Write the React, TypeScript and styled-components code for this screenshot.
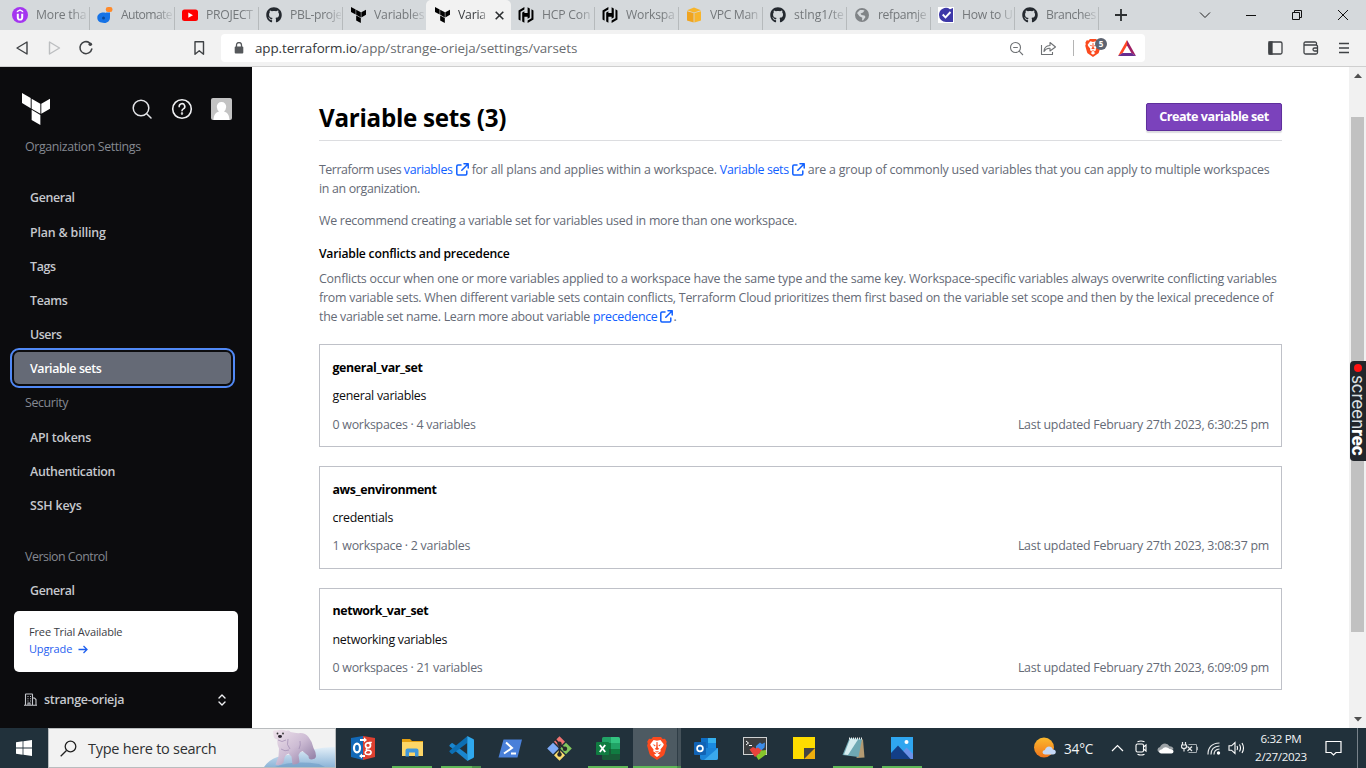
import React from "react";
import styled, { createGlobalStyle, css } from "styled-components";
import { FaGithub } from "react-icons/fa";

const Global = createGlobalStyle`
  * { box-sizing: border-box; }
  body { margin: 0; background: #fff; overflow: hidden; }
  body, button { font-family: "Open Sans", "Noto Sans", sans-serif; }
  svg { display: block; flex: none; }
`;

const Screen = styled.div`
  width: 1366px;
  height: 768px;
  display: flex;
  flex-direction: column;
  position: relative;
  overflow: hidden;
`;

/* ---------- browser chrome ---------- */

const TabStrip = styled.div`
  height: 30px;
  flex: none;
  background: #d5d9dc;
  display: flex;
  padding-left: 4px;
`;

const Tab = styled.div<{ $active?: boolean; $wide?: boolean; $quiet?: boolean }>`
  width: ${(p) => (p.$wide ? 85 : 84)}px;
  height: 30px;
  flex: none;
  display: flex;
  align-items: center;
  padding-left: 8px;
  color: #74787b;
  font-size: 12.2px;
  position: relative;
  &::after {
    content: "";
    position: absolute;
    right: -1px;
    top: 7px;
    width: 1px;
    height: 23px;
    background: ${(p) => (p.$quiet || p.$active ? "transparent" : "#b6babc")};
  }
  ${(p) =>
    p.$active &&
    css`
      background: #f2f2f2;
      color: #3a3d40;
      border-radius: 5px 5px 0 0;
      width: 85px;
      margin-right: -1px;
    `}
`;

const Favicon = styled.span`
  width: 16px;
  height: 16px;
  margin-right: 8px;
  display: flex;
  align-items: center;
  justify-content: center;
  flex: none;
`;

const TabTitle = styled.span<{ $short?: boolean; $ls: number }>`
  width: ${(p) => (p.$short ? 30 : 51)}px;
  letter-spacing: ${(p) => p.$ls}px;
  overflow: hidden;
  white-space: nowrap;
  flex: none;
  line-height: 18px;
  mask-image: linear-gradient(to right, #000 70%, rgba(0, 0, 0, 0.15));
`;

const WindowButtons = styled.div`
  flex: 1;
  display: flex;
  align-items: center;
  justify-content: flex-end;
  gap: 34px;
  padding-right: 17px;
  svg { width: 12px; height: 12px; }
`;

const NewTab = styled.div`
  display: flex;
  align-items: center;
  padding-left: 17px;
`;

const Toolbar = styled.div`
  height: 37px;
  flex: none;
  background: #f2f2f2;
  border-bottom: 1px solid #cfcfcf;
  display: flex;
  align-items: center;
`;

const NavButtons = styled.div`
  width: 221px;
  display: flex;
  align-items: center;
  padding-left: 14px;
  gap: 16px;
  svg:last-child { margin-left: 81px; }
`;

const AddressBar = styled.div`
  width: 924px;
  height: 28px;
  background: #fff;
  border-radius: 4px;
  display: flex;
  align-items: center;
  padding: 0 9px 0 13px;
`;

const Url = styled.span`
  flex: 1;
  margin-left: 11px;
  font-size: 13.4px;
  letter-spacing: -0.09px;
  color: #6a6d70;
  white-space: nowrap;
  b { color: #34373a; font-weight: 400; }
`;

const AddressTools = styled.div`
  display: flex;
  align-items: center;
`;

const Divider = styled.i`
  width: 1px;
  height: 16px;
  background: #b4b4b4;
  margin: 0 11px 0 16px;
`;

const ShieldWrap = styled.span`
  position: relative;
  margin-right: 17px;
`;

const ShieldCount = styled.span`
  position: absolute;
  left: 10px;
  top: -1px;
  width: 12px;
  height: 12px;
  border-radius: 6px;
  background: #5d6370;
  color: #fff;
  font: 700 8px/12px "Open Sans", sans-serif;
  text-align: center;
`;

const ToolbarEnd = styled.div`
  flex: 1;
  display: flex;
  align-items: center;
  justify-content: flex-end;
  padding-right: 17px;
  gap: 20px;
`;

/* ---------- page body ---------- */

const Body = styled.div`
  height: 661px;
  flex: none;
  display: flex;
`;

const Sidebar = styled.aside`
  width: 252px;
  background: #0c0c0e;
  display: flex;
  flex-direction: column;
  flex: none;
`;

const SideHeader = styled.div`
  height: 60px;
  padding: 26px 20px 0 22px;
  display: flex;
  align-items: flex-start;
`;

const SideTools = styled.div`
  flex: 1;
  display: flex;
  align-items: center;
  justify-content: flex-end;
  gap: 18.5px;
  padding-top: 5px;
`;

const SideLabel = styled.div<{ $gap: number; $below: number; $ls: number }>`
  margin: ${(p) => p.$gap}px 0 ${(p) => p.$below}px 25px;
  height: 18px;
  line-height: 18px;
  font-size: 12.4px;
  letter-spacing: ${(p) => p.$ls}px;
  color: #858991;
  white-space: nowrap;
`;

const SideItem = styled.a<{ $active?: boolean; $ls?: number; $gap?: number }>`
  height: 32px;
  flex: none;
  margin: ${(p) => p.$gap ?? 0}px 21px 2px 14px;
  padding-left: 16px;
  line-height: 34px;
  font-size: 12.4px;
  font-weight: 600;
  letter-spacing: ${(p) => p.$ls ?? -0.35}px;
  color: #c6c8cd;
  white-space: nowrap;
  border-radius: 5px;
  ${(p) =>
    p.$active &&
    css`
      color: #fff;
      background: #656a76;
      outline: 2px solid #5189f5;
      outline-offset: 2px;
    `}
`;

const TrialCard = styled.div`
  margin: 3px 14px 0;
  height: 61px;
  flex: none;
  background: #fff;
  border-radius: 5px;
  padding: 12px 15px;
  font-size: 11px;
  line-height: 17px;
  letter-spacing: -0.15px;
  color: #3b3d45;
`;

const Upgrade = styled.a`
  color: #1f60f0;
  display: flex;
  align-items: center;
  gap: 6px;
  svg { margin-top: 2px; }
`;

const OrgRow = styled.div`
  height: 55px;
  padding: 0 26px 0 24px;
  display: flex;
  align-items: center;
  font-size: 12.5px;
  font-weight: 600;
  color: #c6c8cd;
  letter-spacing: -0.29px;
  span { flex: 1; margin-left: 7px; }
`;

const Main = styled.main`
  width: 1097px;
  flex: none;
  background: #fff;
  padding: 35px 67px 0;
`;

const TitleRow = styled.div`
  height: 39px;
  display: flex;
  justify-content: space-between;
  border-bottom: 1px solid #dcdde0;
`;

const Title = styled.h1`
  margin: 0;
  font-size: 24.2px;
  line-height: 32px;
  font-weight: 700;
  letter-spacing: -0.28px;
  color: #000;
`;

const CreateButton = styled.button`
  width: 136px;
  height: 28px;
  margin-top: 1px;
  padding: 0 0 2px;
  border: 1px solid #5f2f9c;
  border-radius: 2px;
  background: #7b42bc;
  box-shadow: 0 2px 1px rgba(40, 40, 60, 0.16);
  color: #fff;
  font-size: 12.6px;
  font-weight: 700;
  letter-spacing: -0.47px;
  white-space: nowrap;
`;

const Paragraph = styled.p<{ $top: number }>`
  margin: ${(p) => p.$top}px 0 0;
  color: #656a76;
  font-size: 12.4px;
`;

const Line = styled.span<{ $ls?: number }>`
  display: flex;
  align-items: center;
  height: 19px;
  line-height: 19px;
  white-space: pre;
  letter-spacing: ${(p) => p.$ls ?? -0.24}px;
`;

const Run = styled.span<{ $ls: number }>`
  letter-spacing: ${(p) => p.$ls}px;
`;

const Link = styled.a<{ $ls?: number }>`
  color: #1060ff;
  display: inline-flex;
  align-items: center;
  gap: 3px;
  letter-spacing: ${(p) => p.$ls ?? -0.33}px;
`;

const SubHeading = styled.h2`
  margin: 14px 0 6px;
  height: 19px;
  line-height: 19px;
  font-size: 12.2px;
  font-weight: 600;
  letter-spacing: -0.22px;
  color: #000;
`;

const SetList = styled.div`
  margin-top: 18px;
  display: flex;
  flex-direction: column;
  gap: 19px;
`;

const SetCard = styled.article<{ $last: boolean }>`
  height: ${(p) => (p.$last ? 102 : 103)}px;
  border: 1px solid #bfc1c8;
  padding: ${(p) => (p.$last ? 12 : 13)}px 12px 0 12.5px;
  font-size: 12.4px;
`;

const SetName = styled.h3`
  margin: 0;
  height: 19px;
  line-height: 19px;
  font-size: 12.4px;
  font-weight: 700;
  letter-spacing: -0.4px;
  color: #000;
`;

const SetNote = styled.div<{ $above: number; $below: number }>`
  margin: ${(p) => p.$above}px 0 ${(p) => p.$below}px;
  height: 19px;
  line-height: 19px;
  letter-spacing: -0.27px;
  color: #0c0c0e;
`;

const SetMeta = styled.div`
  display: flex;
  justify-content: space-between;
  line-height: 19px;
  color: #656a76;
  letter-spacing: -0.255px;
`;

const Scrollbar = styled.div`
  width: 17px;
  background: #f1f1f1;
  display: flex;
  flex-direction: column;
  align-items: center;
  justify-content: space-between;
  padding: 6px 0;
`;

const Thumb = styled.div`
  width: 13px;
  height: 515px;
  background: #c1c1c1;
  margin: 39px 0 85px;
`;

const Recorder = styled.div`
  position: absolute;
  right: 0;
  top: 361px;
  width: 16px;
  height: 100px;
  background: #22262b;
  border-radius: 4px 0 0 4px;
  display: flex;
  flex-direction: column;
  align-items: center;
  padding-top: 3px;
`;

const RecDot = styled.i`
  width: 8px;
  height: 8px;
  border-radius: 4px;
  background: #f11;
  margin-right: 1px;
`;

const RecText = styled.span`
  margin-top: 3px;
  writing-mode: vertical-rl;
  font: 400 17px/16px "Inter", sans-serif;
  letter-spacing: -0.1px;
  color: #dfe1e3;
  b { font-weight: 800; color: #fff; }
`;

/* ---------- taskbar ---------- */

const Taskbar = styled.footer`
  height: 40px;
  flex: none;
  background: #21313b;
  display: flex;
`;

const Start = styled.div`
  width: 48px;
  display: flex;
  align-items: center;
  justify-content: center;
`;

const Search = styled.div`
  width: 288px;
  height: 40px;
  background: #f2f2f2;
  border: 1px solid #b9bcbe;
  display: flex;
  align-items: center;
  padding-left: 11px;
  color: #2f3133;
  font-size: 14.5px;
  letter-spacing: -0.27px;
  white-space: nowrap;
  overflow: hidden;
  span { margin-left: 11px; flex: 1; }
`;

const Apps = styled.div`
  display: flex;
  width: 594px;
  padding-left: 2.5px;
`;

const AppSlot = styled.div<{ $active?: boolean; $open?: boolean; $stacked?: boolean }>`
  width: 49px;
  height: 40px;
  flex: none;
  display: flex;
  align-items: center;
  justify-content: center;
  ${(p) =>
    p.$open &&
    css`
      background: linear-gradient(#5fb858, #5fb858) 4px 100% / 40px 2px no-repeat;
    `}
  ${(p) =>
    p.$stacked &&
    css`
      background: linear-gradient(90deg, #5fb858 31px, #4a8f4c 31px) 4px 100% / 40px 2px no-repeat;
    `}
  ${(p) =>
    p.$active &&
    css`
      background: linear-gradient(90deg, #5fb858 44px, #4a8f4c 44px) 0 100% / 48px 2px no-repeat,
        linear-gradient(90deg, #4d5a62 0 44px, #2f3d46 44px 45px, #45525a 45px) 0 0 / 48px 40px no-repeat;
    `}
`;

const Tray = styled.div`
  flex: 1;
  display: flex;
  align-items: center;
  padding-left: 104px;
  color: #f2f4f5;
  white-space: nowrap;
`;

const Temp = styled.span`
  margin: 0 16px 0 8px;
  width: 31px;
  font-size: 13.6px;
  letter-spacing: -0.2px;
`;

const TrayIcons = styled.div`
  display: flex;
  align-items: center;
  gap: 7px;
  width: 139px;
`;

const Clock = styled.div`
  width: 62px;
  text-align: center;
  font-size: 11.6px;
  line-height: 18px;
  letter-spacing: -0.35px;
`;

const Notify = styled.div`
  margin-left: 9px;
  width: 37px;
  height: 40px;
  display: flex;
  align-items: center;
  padding-left: 4px;
  border-right: 1px solid #78828a;
`;

/* ---------- drawings ---------- */

const TerraformMark = ({ size = 16, color = "#000", h }: { size?: number; color?: string; h?: number }) => (
  <svg width={size} height={h ?? size} viewBox="1.44 0 21.12 24" fill={color} preserveAspectRatio="none">
    <path d="M1.44 0v7.575l6.561 3.79V3.787zm21.12 4.227l-6.561 3.791v7.574l6.56-3.787zM8.72 4.23v7.575l6.561 3.787V8.018zm0 8.405v7.575L15.28 24v-7.578z" />
  </svg>
);

const HashiMark = () => (
  <svg width="16" height="16" viewBox="0 0 24 24" fill="#000">
    <path d="M9.6 0 .8 5.200v13.600l3 1.700V7.200l5.800-3.400zM14.400 24l8.800-5.200V5.200l-3-1.700v13.300l-5.800 3.400zM9.600 6.300 6.300 8.200v13.700l3.300 1.900v-9.200h4.800v3.100l3.300-1.900V2.100L14.400.2v8.800H9.600z" />
  </svg>
);

const UdemyMark = () => (
  <svg width="16" height="16" viewBox="0 0 16 16">
    <circle cx="8" cy="8" r="8" fill="#a435f0" />
    <path d="M8 2.200 11.200 4v1.600L8 3.800 4.800 5.600V4zM4.800 6.800h2v3.600c0 1 .5 1.400 1.200 1.400s1.200-.4 1.200-1.400V6.800h2v3.600c0 2-1.200 3.200-3.200 3.200s-3.200-1.200-3.200-3.200z" fill="#fff" />
  </svg>
);

const DocMark = () => (
  <svg width="16" height="16" viewBox="0 0 16 16">
    <path d="M8.800 5.500h4.200v5c0 3-2.300 5.500-5.600 5.500C3.300 16 .3 14.200.3 10.800.3 7.800 3 5.600 6.200 5.600c1 0 1.900.1 2.600.4z" fill="#1673e6" />
    <circle cx="6.500" cy="11" r="1.500" fill="#0a4a9c" />
    <rect x="8.800" y="0" width="6.700" height="5" rx="2.300" fill="#ff8a2a" />
  </svg>
);

const YoutubeMark = () => (
  <svg width="16" height="16" viewBox="0 0 16 16">
    <rect y="2.500" width="16" height="11.500" rx="2.500" fill="#f00" />
    <path d="M6.300 5.600v5.200L11 8.200z" fill="#fff" />
  </svg>
);

const AwsCube = () => (
  <svg width="16" height="16" viewBox="0 0 16 16">
    <path d="M1 3.200 8 .6l7 2.600L8 5.400z" fill="#f7b52c" />
    <path d="M1 4.200 7.600 6v9.500L1 13.400z" fill="#f0a41f" />
    <path d="M15 4.200 8.400 6v9.500l6.600-2.100z" fill="#f7b52c" />
  </svg>
);

const GlobeMark = () => (
  <svg width="16" height="16" viewBox="0 0 16 16">
    <circle cx="8" cy="8" r="7" fill="#808487" />
    <path d="M6 3c2 0 3.500-.5 4.500.6L9 5.500 6.500 6.500l1 1.500 3 .5 1 1.500-2.500 3.500-1-.2.3-2.500-2.800-1.500L3 6z" fill="#d5d9dc" />
  </svg>
);

const CheckMark = () => (
  <svg width="16" height="16" viewBox="0 0 16 16">
    <rect width="16" height="16" fill="#fff" />
    <path d="M1 8a7 7 0 0 1 11-5.800L15 1v14H8a7 7 0 0 1-7-7z" fill="#3d38a8" />
    <path d="M4.700 7.500 7.500 10.300l5-5.300" fill="none" stroke="#fff" strokeWidth="1.900" />
  </svg>
);

const ExternalIcon = () => (
  <svg width="13" height="13" viewBox="0 0 13 13" fill="none" stroke="#1060ff" strokeWidth="1.500" strokeLinecap="round" strokeLinejoin="round">
    <path d="M8 .8h4.200V5M12 1 5.800 7.200M5 2H2Q.8 2 .8 3.200v7.600Q.8 12 2 12h7.600q1.200 0 1.200-1.200V8" />
  </svg>
);

const LionIcon = ({ w, h }: { w: number; h: number }) => (
  <svg width={w} height={h} viewBox="0 0 20 23">
    <path d="M6 0h8l1.600 1.900L18 1.700l1.800 3-.6 1.700.7 2.200-2.300 8.200q-.4 1.300-1.600 2.200L10 23l-6-4q-1.200-.9-1.600-2.200L.1 8.600l.7-2.200-.6-1.700L2 1.700l2.400.2z" fill="#fb4a1e" />
    <path d="M10 3.700 13.400 3l3.400 4.200-.6 1.900-2.800 3.300.4 1.900L10 16.800l-3.800-2.500.4-1.900-2.800-3.300-.6-1.900L6.600 3zM10 20l-3-2.200L10 16l3 1.800z" fill="#fff" />
    <path d="M5.500 7.300 8.500 8 8 9.500zm9 0-3 .7.500 1.500zM9.500 5h1l.3 5.500 1.500 1.500L10 13l-2.300-1 1.500-1.500zM7.500 13.800l2.500.8 2.500-.8-2.500 2z" fill="#fb4a1e" />
  </svg>
);

const BearArt = () => (
  <svg width="71" height="38" viewBox="0 0 71 38">
    <defs>
      <linearGradient id="ice" x1="0" y1="0" x2="0" y2="1">
        <stop offset="0" stopColor="#e3eff8" />
        <stop offset="1" stopColor="#8db5d8" />
      </linearGradient>
      <linearGradient id="fur" x1="0" y1="0" x2="1" y2="1">
        <stop offset="0" stopColor="#f0e4ec" />
        <stop offset=".5" stopColor="#cdbcd4" />
        <stop offset="1" stopColor="#85729c" />
      </linearGradient>
    </defs>
    <path d="M0 38q6-9 18-11 16-3 28-6 14-3 25-3v20z" fill="url(#ice)" />
    <path d="M11 38q18-7 44-3l6 3z" fill="#6e9cc7" opacity=".6" />
    <path d="M9 2.500Q10 .5 12.500 1.500q5-1.500 10 .2Q25 .5 26.500 3q6 1.500 10 1 5 0 8 4 4 5 5 11 2.500 4 2.500 8 0 3-4.500 3.500-3 0-3-3.500l-6-5q-3 1-4 4l1 7q-2 3-7 2.500l-1-8-3-3q-3 1-4 4l-1 5q-3 4-8 2l3-8 .5-8q-2.500-5-1.500-9-4-.5-4-4.500z" fill="url(#fur)" />
    <path d="M24 10q-2 6 2 10M35 20q2-4 1-8M17 20q4 3 8 1M14 11q4 3 8 0" stroke="#9f8bb2" fill="none" opacity=".7" />
    <circle cx="13.500" cy="4.500" r=".9" fill="#333" /><circle cx="19" cy="4.500" r=".9" fill="#333" />
    <ellipse cx="16" cy="7.500" rx="2" ry="1.400" fill="#2c2530" />
  </svg>
);

const OgIcon = () => (
  <svg width="24" height="24" viewBox="0 0 24 24">
    <path d="M0 2 12 0v24L0 21z" fill="#1269b8" /><path d="m12 0 12 2v19l-12 3z" fill="#dd4030" />
    <ellipse cx="6" cy="12" rx="3" ry="4.300" fill="none" stroke="#fff" strokeWidth="2.200" />
    <circle cx="17" cy="9.300" r="2.500" fill="none" stroke="#fff" strokeWidth="1.700" />
    <path d="M20.800 6.500h-3M16 12.300c-1.500 1.200-.5 1.900 1 1.900 4.500 0 3.800 4.300.2 4.300-3.800 0-3.800-3-1-3.800" fill="none" stroke="#fff" strokeWidth="1.500" />
    <path d="M9 3h4V1.200L16 4l-3 2.500V5H9zM14 19h-3v-1.500L8 20l3 2.500V21h3z" fill="#fff" />
  </svg>
);

const FolderIcon = () => (
  <svg width="23" height="20" viewBox="0 0 23 20">
    <path d="M1 1h8l2 2h11v4H1z" fill="#e5a011" /><path d="M1 4h21v14H1z" fill="#fdd667" />
    <path d="M4.500 18.500v-6q0-2 2-2h9q2 0 2 2v6H14v-4H8v4z" fill="#3f97dc" />
  </svg>
);

const CodeIcon = () => (
  <svg width="25" height="25" viewBox="0 0 24 24">
    <path d="M.6 8.600 2.400 7q.6-.4 1.200 0L17.500 17.400v6.300L.6 9.800q-.6-.6 0-1.200z" fill="#1a86cf" />
    <path d="M.6 15.400 2.400 17q.6.400 1.200 0L17.500 6.600V.3L.6 14.200q-.6.600 0 1.200z" fill="#0c6fb4" />
    <path d="M17.500.1 23.200 2.800q.8.400.8 1.200v16q0 .8-.8 1.200L17.500 23.900z" fill="#2fa8ee" />
  </svg>
);

const ShellIcon = () => (
  <svg width="24" height="19" viewBox="0 0 24 19">
    <path d="M5.500.5H24L19.500 18.500H.5z" fill="#4a80d9" />
    <path d="m8 3.500 6 5.500-8 5.500M13 14.500h5" fill="none" stroke="#fff" strokeWidth="2" />
  </svg>
);

const GitIcon = () => (
  <svg width="25" height="25" viewBox="0 0 25 25">
    <path d="m12.500.2 5.500 5.500-5.500 5.500L7 5.700z" fill="#ef7372" /><path d="m6 6.800 5.800 5.700L6 18.300.2 12.500z" fill="#7eaaf7" />
    <path d="m19 6.800 5.800 5.700-5.800 5.800-5.800-5.800z" fill="#83c75d" /><path d="m12.500 13.800 5.500 5.500-5.500 5.500L7 19.300z" fill="#fbdd6d" />
    <path d="m8 3 4.500 5v11M12.500 8l5.500 4.800" fill="none" stroke="#26292c" strokeWidth="1.700" />
    <circle cx="12.500" cy="7.800" r="2.200" fill="#26292c" /><circle cx="18" cy="12.800" r="2.200" fill="#26292c" /><circle cx="12.500" cy="18.500" r="2.200" fill="#26292c" />
  </svg>
);

const ExcelIcon = () => (
  <svg width="24" height="23" viewBox="0 0 24 23">
    <path d="M6 1.500Q6 0 7.500 0H15v11H6z" fill="#21a366" /><path d="M15 0h7.500Q24 0 24 1.500V6h-9z" fill="#33c481" />
    <path d="M15 6h9v6h-9z" fill="#21a366" /><path d="M6 6h9v6H6z" fill="#107c41" />
    <path d="M6 12h18v9.500q0 1.500-1.500 1.500h-15Q6 23 6 21.500z" fill="#185c37" /><path d="M15 12h9v5h-9z" fill="#107c41" />
    <rect y="5" width="13" height="13" rx="1" fill="#107c41" />
    <path d="m3.800 8 5.400 7M9.200 8l-5.400 7" stroke="#fff" strokeWidth="1.900" />
  </svg>
);

const OutlookIcon = () => (
  <svg width="24" height="23" viewBox="0 0 24 23">
    <rect x="7" y="1" width="15" height="12" fill="#0f6fc6" /><path d="M14 1h8v5h-8z" fill="#35b0ee" /><path d="M14 6h8v5h-8z" fill="#1a8ae0" />
    <path d="M6 11h18v10q0 2-2 2H8q-2 0-2-2z" fill="#1b84d8" /><path d="m24 11-14 12h12q2 0 2-2z" fill="#3aa8ec" />
    <rect y="5" width="12" height="13" rx="1" fill="#1163b5" /><circle cx="6" cy="11.500" r="2.900" fill="none" stroke="#fff" strokeWidth="1.700" />
  </svg>
);

const TerminalIcon = () => (
  <svg width="24" height="23" viewBox="0 0 24 23">
    <rect x=".5" y=".5" width="23" height="17" fill="#3b3e40" stroke="#cfd1d2" />
    <path d="m3 4 2.500 2L3 8M6 8.500h3" stroke="#fff" fill="none" />
    <path d="m13 9 4-3.500 2 1.500 3-1.500-.5 5-4.500 4-4-2z" fill="#3c8ce8" />
    <path d="m6.500 12.500 3.500-2.500 3 1.500 2-1 4 3-3 3.500-4 3z" fill="#e9433c" />
    <path d="m13 19 3.500-2.500 1.500-3 5-.5.500 4-8 6z" fill="#86c62b" />
  </svg>
);

const NoteIcon = () => (
  <svg width="22" height="22" viewBox="0 0 22 22">
    <path d="M0 0h22v11H11v11H0z" fill="#fedc00" /><path d="M11 22V11h11z" fill="#444" /><path d="M22 11v11H11z" fill="#efae0d" />
  </svg>
);

const NotepadIcon = () => (
  <svg width="23" height="22" viewBox="0 0 23 22">
    <path d="m18 2 3 .5 1.500 18-8 .5z" fill="#b39a72" /><path d="M7.500 1 20 2l-3.500 18L.5 18z" fill="#6fa9b4" /><path d="m8 2 8 .5L6 18l-4-.5z" fill="#d6edf0" />
    <path d="M7 1.500h13" stroke="#eee" strokeWidth="2" strokeDasharray="1 1" />
  </svg>
);

const PhotoIcon = () => (
  <svg width="22" height="22" viewBox="0 0 22 22">
    <rect width="22" height="22" fill="#2fa6f0" /><path d="M9 18 15.500 10.500 22 17v5H9z" fill="#6c92e8" />
    <path d="M0 16 7 8.500 19.500 22H0z" fill="#133f87" /><circle cx="15.500" cy="5" r="2" fill="#fff" />
  </svg>
);

/* ---------- data ---------- */

const gh = <FaGithub size={16} color="#24292f" />;
const tabs: { title: string; icon: React.ReactNode; wide?: boolean; active?: boolean; quiet?: boolean; ls?: number }[] = [
  { title: "More tha", icon: <UdemyMark />, wide: true },
  { title: "Automate", icon: <DocMark />, wide: true, ls: -0.65 },
  { title: "PROJECT", icon: <YoutubeMark />, ls: -0.3 },
  { title: "PBL-proje", icon: gh, ls: -0.35 },
  { title: "Variables", icon: <TerraformMark size={15} h={16} />, quiet: true },
  { title: "Varia", icon: <TerraformMark size={15} h={16} />, active: true },
  { title: "HCP Con", icon: <HashiMark /> },
  { title: "Workspa", icon: <HashiMark /> },
  { title: "VPC Man", icon: <AwsCube />, ls: -0.4 },
  { title: "stlng1/te", icon: gh, ls: 0 },
  { title: "refpamje", icon: <GlobeMark />, ls: -0.4 },
  { title: "How to U", icon: <CheckMark />, ls: -0.25 },
  { title: "Branches", icon: gh, ls: -0.4 },
];

const sets = [
  { name: "general_var_set", above: 9, below: 10, note: "general variables", meta: "0 workspaces · 4 variables", time: "6:30:25 pm" },
  { name: "aws_environment", above: 9, below: 9, note: "credentials", meta: "1 workspace · 2 variables", time: "3:08:37 pm" },
  { name: "network_var_set", above: 10, below: 9, note: "networking variables", meta: "0 workspaces · 21 variables", time: "6:09:09 pm" },
];

const apps: { icon: React.ReactNode; open?: boolean; active?: boolean; stacked?: boolean }[] = [
  { icon: <OgIcon /> },
  { icon: <FolderIcon />, open: true },
  { icon: <CodeIcon />, stacked: true },
  { icon: <ShellIcon /> },
  { icon: <GitIcon /> },
  { icon: <ExcelIcon />, open: true },
  { icon: <LionIcon w={20} h={23} />, active: true },
  { icon: <OutlookIcon /> },
  { icon: <TerminalIcon /> },
  { icon: <NoteIcon /> },
  { icon: <NotepadIcon />, open: true },
  { icon: <PhotoIcon />, open: true },
];

export default function App() {
  return (
    <Screen>
      <Global />
      <TabStrip>
        {tabs.map((t, i) => (
          <Tab key={i} $active={t.active} $wide={t.wide} $quiet={t.quiet}>
            <Favicon>{t.icon}</Favicon>
            <TabTitle $short={t.active} $ls={t.ls ?? -0.2}>{t.title}</TabTitle>
            {t.active && (
              <svg width="9" height="9" viewBox="0 0 9 9" stroke="#2c2f31" strokeWidth="1.600" style={{ marginLeft: 7 }}>
                <path d="m.7.7 7.600 7.600M8.300.7.7 8.300" />
              </svg>
            )}
          </Tab>
        ))}
        <NewTab>
          <svg width="12" height="12" viewBox="0 0 12 12" stroke="#2c2f31" strokeWidth="1.800"><path d="M6 0v12M0 6h12" /></svg>
        </NewTab>
        <WindowButtons>
          <svg viewBox="0 0 12 12" fill="none" stroke="#222"><path d="m1 3.500 5 5 5-5" /></svg>
          <svg viewBox="0 0 12 12" stroke="#111"><path d="M1 6.500h10" /></svg>
          <svg viewBox="0 0 12 12" fill="none" stroke="#111"><path d="M1.500 3.500h7v7h-7zM3.500 3.500v-2h7v7h-2" /></svg>
          <svg viewBox="0 0 12 12" stroke="#111"><path d="m1 1 10 10M11 1 1 11" /></svg>
        </WindowButtons>
      </TabStrip>

      <Toolbar>
        <NavButtons>
          <svg width="16" height="16" viewBox="0 0 16 16" fill="none" stroke="#3f4245" strokeWidth="1.400" strokeLinejoin="round"><path d="M13 2v12L3 8z" /></svg>
          <svg width="16" height="16" viewBox="0 0 16 16" fill="none" stroke="#bcbec0" strokeWidth="1.400" strokeLinejoin="round"><path d="M3.500 2v12l10-6z" /></svg>
          <svg width="16" height="16" viewBox="0 0 16 16" fill="none" stroke="#3f4245" strokeWidth="1.500" strokeLinecap="round"><path d="M11.500 2.800A6 6 0 1 0 13.800 9" /><circle cx="12.300" cy="4.200" r="1.800" fill="#3f4245" stroke="none" /></svg>
          <svg width="16" height="16" viewBox="0 0 16 16" fill="none" stroke="#3f4245" strokeWidth="1.400" strokeLinejoin="round"><path d="M4 1.800h8.500v12.500L8.250 10.800 4 14.300z" /></svg>
        </NavButtons>
        <AddressBar>
          <svg width="10" height="12" viewBox="0 0 10 12"><path d="M2.500 5V3a2.500 2.500 0 0 1 5 0v2" fill="none" stroke="#55585b" strokeWidth="1.300" /><rect x=".7" y="4.500" width="8.600" height="7" rx="1" fill="#55585b" /></svg>
          <Url><b>app.terraform.io</b>/app/strange-orieja/settings/varsets</Url>
          <AddressTools>
            <svg width="15" height="15" viewBox="0 0 15 15" fill="none" stroke="#6f7275" strokeWidth="1.100"><circle cx="6.500" cy="6.500" r="5" /><path d="m10.200 10.200 3.800 3.800M4.200 6.500h4.600" /></svg>
            <svg width="17" height="15" viewBox="0 0 17 15" fill="none" stroke="#6f7275" strokeWidth="1.100" strokeLinejoin="round" style={{ marginLeft: 16 }}><path d="M1.500 4v9.500h11V11M4 10.500q0-5.500 6-6V1.500L15.500 6 10 10V7.300Q6 7 4 10.500z" /></svg>
            <Divider />
            <ShieldWrap><LionIcon w={16} h={18} /><ShieldCount>5</ShieldCount></ShieldWrap>
            <svg width="18" height="16" viewBox="0 0 18 16"><path d="M9 0 0 16l4.500-2.800L9 5.500z" fill="#ff4724" /><path d="m9 0 9 16-4.500-2.800L9 5.500z" fill="#9e1f63" /><path d="M0 16h18l-4.500-3h-9z" fill="#662d91" /></svg>
          </AddressTools>
        </AddressBar>
        <ToolbarEnd>
          <svg width="15" height="14" viewBox="0 0 15 14" fill="none" stroke="#3f4245" strokeWidth="1.300"><rect x="1" y="1" width="13" height="12" rx="1.500" /><path d="M1 1h3v12H1z" fill="#3f4245" /></svg>
          <svg width="16" height="14" viewBox="0 0 16 14" fill="none" stroke="#3f4245" strokeWidth="1.300"><path d="M13.500 4V2.500Q13.500 1 12 1H2.500Q1 1 1 2.500v9Q1 13 2.500 13H13q1.500 0 1.500-1.500v-6Q14.500 4 13 4H1M15 7h-3.500a1.500 1.500 0 0 0 0 3H15" /></svg>
          <svg width="10" height="12" viewBox="0 0 10 12" stroke="#3f4245" strokeWidth="1.500"><path d="M0 1.500h10M0 6h10M0 10.500h10" /></svg>
        </ToolbarEnd>
      </Toolbar>

      <Body>
        <Sidebar>
          <SideHeader>
            <TerraformMark size={28} h={32} color="#fff" />
            <SideTools>
              <svg width="20" height="20" viewBox="0 0 20 20" fill="none" stroke="#e4e5e8" strokeWidth="1.500" strokeLinecap="round"><circle cx="9" cy="9" r="7.800" /><path d="m14.700 14.700 4.300 4.300" /></svg>
              <svg width="22" height="22" viewBox="0 0 22 22" fill="none" stroke="#f0f1f3" strokeWidth="1.600" strokeLinecap="round"><circle cx="11" cy="11" r="9.300" /><path d="M8.200 8.600a2.800 2.800 0 1 1 4.200 2.300c-1 .6-1.400 1-1.400 1.900" /><circle cx="11" cy="15.500" r=".4" fill="#fff" /></svg>
              <svg width="21" height="22" viewBox="0 0 21 22"><rect width="21" height="22" rx="2" fill="#c3c3c3" /><path d="M10.500 4a4.600 4.600 0 0 1 4.700 5q-.3 3-2.200 4.500c3.500.8 5.200 3.500 5.500 8.500h-16c.3-5 2-7.700 5.500-8.500Q6.100 12 5.800 9a4.600 4.600 0 0 1 4.700-5z" fill="#fff" /></svg>
            </SideTools>
          </SideHeader>
          <SideLabel $gap={11} $below={25} $ls={-0.37}>Organization Settings</SideLabel>
          <SideItem>General</SideItem>
          <SideItem $gap={1} $ls={-0.16}>Plan &amp; billing</SideItem>
          <SideItem>Tags</SideItem>
          <SideItem>Teams</SideItem>
          <SideItem $ls={-0.45}>Users</SideItem>
          <SideItem $active $ls={-0.39}>Variable sets</SideItem>
          <SideLabel $gap={8} $below={9} $ls={-0.38}>Security</SideLabel>
          <SideItem $ls={-0.24}>API tokens</SideItem>
          <SideItem $ls={-0.3}>Authentication</SideItem>
          <SideItem $ls={-0.17}>SSH keys</SideItem>
          <SideLabel $gap={25} $below={8} $ls={-0.48}>Version Control</SideLabel>
          <SideItem>General</SideItem>
          <TrialCard>
            Free Trial Available
            <Upgrade>
              Upgrade
              <svg width="10" height="9" viewBox="0 0 10 9" fill="none" stroke="#1f60f0" strokeWidth="1.300"><path d="M.5 4.500h8.500M5.500 1 9 4.500 5.500 8" /></svg>
            </Upgrade>
          </TrialCard>
          <OrgRow>
            <svg width="13" height="13" viewBox="0 0 13 13" fill="none" stroke="#c6c8cd" strokeWidth="1.100"><path d="M1.500 12V1.500Q1.500 1 2 1h6q.5 0 .5.500V12M0 12.300h13M8.500 5h2l1.500 1.500V12M3.500 3.500h1M6 3.500h1M3.500 5.800h1M6 5.800h1M3.500 8h1M6 8h1M4 12v-2h2v2" /></svg>
            <span>strange-orieja</span>
            <svg width="8" height="12" viewBox="0 0 8 12" fill="none" stroke="#f0f1f3" strokeWidth="1.400" strokeLinecap="round" strokeLinejoin="round"><path d="m1 4 3-3 3 3M1 8l3 3 3-3" /></svg>
          </OrgRow>
        </Sidebar>

        <Main>
          <TitleRow>
            <Title>Variable sets (3)</Title>
            <CreateButton>Create variable set</CreateButton>
          </TitleRow>
          <Paragraph $top={19}>
            <Line><Run $ls={-0.46}>Terraform uses </Run><Link $ls={-0.33}>variables<ExternalIcon /></Link><Run $ls={-0.2}> for all plans and applies within a workspace. </Run><Link $ls={-0.35}>Variable sets<ExternalIcon /></Link><Run $ls={-0.2}> are a group of commonly used variables that you can apply to multiple workspaces</Run></Line>
            <Line $ls={-0.32}>in an organization.</Line>
          </Paragraph>
          <Paragraph $top={13}>
            <Line $ls={-0.255}>We recommend creating a variable set for variables used in more than one workspace.</Line>
          </Paragraph>
          <SubHeading>Variable conflicts and precedence</SubHeading>
          <Paragraph $top={0}>
            <Line $ls={-0.225}>Conflicts occur when one or more variables applied to a workspace have the same type and the same key. Workspace-specific variables always overwrite conflicting variables</Line>
            <Line $ls={-0.237}>from variable sets. When different variable sets contain conflicts, Terraform Cloud prioritizes them first based on the variable set scope and then by the lexical precedence of</Line>
            <Line $ls={-0.28}>the variable set name. Learn more about variable <Link $ls={-0.3}>precedence<ExternalIcon /></Link>.</Line>
          </Paragraph>
          <SetList>
            {sets.map((s, i) => (
              <SetCard key={s.name} $last={i === sets.length - 1}>
                <SetName>{s.name}</SetName>
                <SetNote $above={s.above} $below={s.below}>{s.note}</SetNote>
                <SetMeta>
                  <span>{s.meta}</span>
                  <span>Last updated February 27th 2023, {s.time}</span>
                </SetMeta>
              </SetCard>
            ))}
          </SetList>
        </Main>

        <Scrollbar>
          <svg width="8" height="5" viewBox="0 0 8 5"><path d="M0 5 4 .5 8 5z" fill="#505050" /></svg>
          <Thumb />
          <svg width="8" height="5" viewBox="0 0 8 5"><path d="M0 0h8L4 4.500z" fill="#505050" /></svg>
        </Scrollbar>
      </Body>

      <Taskbar>
        <Start>
          <svg width="16" height="16" viewBox="0 0 16 16" fill="#fff"><path d="M0 2.200 6.600 1.300v6.300H0zM7.400 1.200 16 0v7.600H7.400zM0 8.400h6.600v6.300L0 13.800zM7.400 8.400H16V16l-8.600-1.200z" /></svg>
        </Start>
        <Search>
          <svg width="17" height="17" viewBox="0 0 17 17" fill="none" stroke="#222" strokeWidth="1.300"><circle cx="10.500" cy="6.500" r="5.300" /><path d="M6.500 10.500.7 16.300" /></svg>
          <span>Type here to search</span>
          <BearArt />
        </Search>
        <Apps>
          {apps.map((a, i) => (
            <AppSlot key={i} $open={a.open} $active={a.active} $stacked={a.stacked}>{a.icon}</AppSlot>
          ))}
        </Apps>
        <Tray>
          <svg width="22" height="22" viewBox="0 0 22 22">
            <defs><linearGradient id="sun" x1="0" y1="0" x2="0" y2="1"><stop offset="0" stopColor="#fbb92d" /><stop offset="1" stopColor="#f0741c" /></linearGradient></defs>
            <circle cx="10" cy="10.500" r="10" fill="url(#sun)" />
            <path d="M11 17.500q-2.500-.2-2.500-2.200 0-2 2.400-2.300Q12 9.500 15 9.500q3 0 3.800 3 3 .3 3 2.600 0 2.200-2.800 2.400z" fill="#c5d8f7" />
          </svg>
          <Temp>34°C</Temp>
          <TrayIcons>
            <svg width="13" height="8" viewBox="0 0 13 8" fill="none" stroke="#fff" strokeWidth="1.200"><path d="M1 7 6.500 1.500 12 7" /></svg>
            <svg width="16" height="16" viewBox="0 0 16 16" fill="none" stroke="#fff" strokeWidth="1.100" style={{ marginLeft: 3 }}><rect x="2" y="4" width="7.500" height="8" rx="1.500" /><path d="M9.500 7 12 5v6L9.500 9M3.500 1.800q3.500-1.600 7 0M3.500 14.200q3.500 1.600 7 0" /></svg>
            <svg width="17" height="11" viewBox="0 0 17 11"><path d="M4 9.500Q.5 9.300.5 6.700q0-2.200 2.500-2.700Q4.500.5 8 .5q3 0 4.500 2.700 3.500 0 4 3z" fill="#9da3a7" /><path d="M4 10.500q-2-.5-2-2 .3-2 3-2.200Q7 3.500 10 4.500q2 .5 2.500 1.500 4 0 4 2.500 0 2-2 2z" fill="#fff" /></svg>
            <svg width="17" height="13" viewBox="0 0 17 13" fill="none" stroke="#e6e8e9"><path d="M7.500 2.500h8v8h-8M15.500 5h1v3h-1" stroke="#a3abb0" /><path d="M1.500 0v3M4.500 0v3M.5 3h5v1.500Q5.500 6.500 3 6.500T.5 4.500zM3 6.500v3M6.500 4.500l4.500 4.500M11 4.500 6.500 9" strokeWidth="1.200" /></svg>
            <svg width="14" height="13" viewBox="0 0 14 13" fill="none" stroke="#e6e8e9" strokeWidth="1.200" style={{ marginLeft: 2 }}><path d="M1 12.500Q1 1.500 12.500 1M4 12.500Q4 4.500 12.500 4M7 12.500Q7 7.500 12.500 7" /><circle cx="11.500" cy="11" r="1.700" fill="#fff" stroke="none" /></svg>
            <svg width="17" height="14" viewBox="0 0 17 14" fill="none" stroke="#fff" strokeWidth="1.100"><path d="M1 4.800h2.500L7 1.500v11L3.500 9.200H1zM9 5q1 2 0 4M11.500 3.500q2 3.500 0 7M14 2q3 5 0 10" /></svg>
          </TrayIcons>
          <Clock>6:32 PM<br />2/27/2023</Clock>
          <Notify>
            <svg width="17" height="17" viewBox="0 0 17 17" fill="none" stroke="#fff" strokeWidth="1.200"><path d="M1 1.500h15v11h-5L8.500 15 6 12.500H1z" /></svg>
          </Notify>
        </Tray>
      </Taskbar>

      <Recorder>
        <RecDot />
        <RecText>screen<b>rec</b></RecText>
      </Recorder>
    </Screen>
  );
}
